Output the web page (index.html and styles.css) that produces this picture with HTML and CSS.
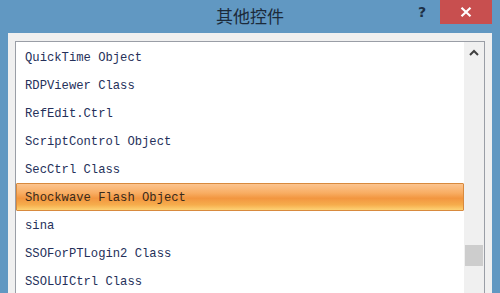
FILE: index.html
```html
<!DOCTYPE html>
<html>
<head>
<meta charset="utf-8">
<link rel="stylesheet" href="styles.css">
</head>
<body>
<div class="window">
  <div class="titlebar">
    <div class="title">其他控件</div>
    <div class="help">?</div>
    <div class="close">
      <svg width="12" height="10" viewBox="0 0 12 10"><path d="M1.5 0.8 L10.5 9.2 M10.5 0.8 L1.5 9.2" stroke="#fff" stroke-width="2.2" stroke-linecap="butt"/></svg>
    </div>
  </div>
  <div class="panel">
    <div class="listbox">
      <ul class="items">
        <li>QuickTime Object</li>
        <li>RDPViewer Class</li>
        <li>RefEdit.Ctrl</li>
        <li>ScriptControl Object</li>
        <li>SecCtrl Class</li>
        <li class="selected">Shockwave Flash Object</li>
        <li>sina</li>
        <li>SSOForPTLogin2 Class</li>
        <li>SSOLUICtrl Class</li>
      </ul>
      <div class="scrollbar">
        <div class="arrow">
          <svg width="10" height="7" viewBox="0 0 10 7"><path d="M1 6 L5 2 L9 6" stroke="#404040" stroke-width="2" fill="none"/></svg>
        </div>
        <div class="thumb"></div>
      </div>
    </div>
  </div>
</div>
</body>
</html>
```
FILE: styles.css
```css
html, body {
  margin: 0;
  padding: 0;
  background: #6198c2;
}
.window {
  width: 500px;
  height: 293px;
  overflow: hidden;
  background: #6198c2;
  display: flex;
  flex-direction: column;
}
.titlebar {
  height: 33px;
  flex: none;
  position: relative;
  display: flex;
  justify-content: center;
}
.title {
  font-family: "Noto Sans CJK SC", sans-serif;
  font-size: 17px;
  line-height: 32px;
  color: #1c2a3a;
}
.help {
  position: absolute;
  left: 418px;
  top: 4px;
  font-family: "DejaVu Sans", sans-serif;
  font-weight: bold;
  font-size: 14px;
  color: #1d3046;
}
.close {
  position: absolute;
  left: 440px;
  top: 0;
  width: 52px;
  height: 24px;
  background: #c84f4f;
  display: flex;
  align-items: center;
  justify-content: center;
}
.panel {
  margin-left: 8px;
  width: 470px;
  padding: 8px 7px 0 7px;
  background: #f0f0f0;
  flex: 1;
}
.listbox {
  border: 1px solid #9a9ea6;
  border-bottom: none;
  background: #fff;
  display: flex;
  height: 300px;
}
.items {
  list-style: none;
  margin: 0;
  padding: 1px 0 0 0;
  width: 448px;
}
.items li {
  height: 28px;
  line-height: 30px;
  padding-left: 9px;
  font-family: "Liberation Mono", monospace;
  font-size: 12.2px;
  color: #25305a;
  box-sizing: border-box;
}
.items li.selected {
  border: 1px solid #d88a3e;
  border-radius: 1px;
  padding-left: 8px;
  line-height: 28px;
  color: #3a2a1a;
  background: linear-gradient(#fcc48e 0%, #f8ad62 35%, #f29640 55%, #f6ad4c 80%, #fdd275 100%);
}
.scrollbar {
  width: 20px;
  background: #f0f0f0;
  position: relative;
}
.arrow {
  height: 20px;
  display: flex;
  align-items: center;
  justify-content: center;
}
.thumb {
  position: absolute;
  left: 1px;
  top: 203px;
  width: 18px;
  height: 21px;
  background: #cdcdcd;
}
```
